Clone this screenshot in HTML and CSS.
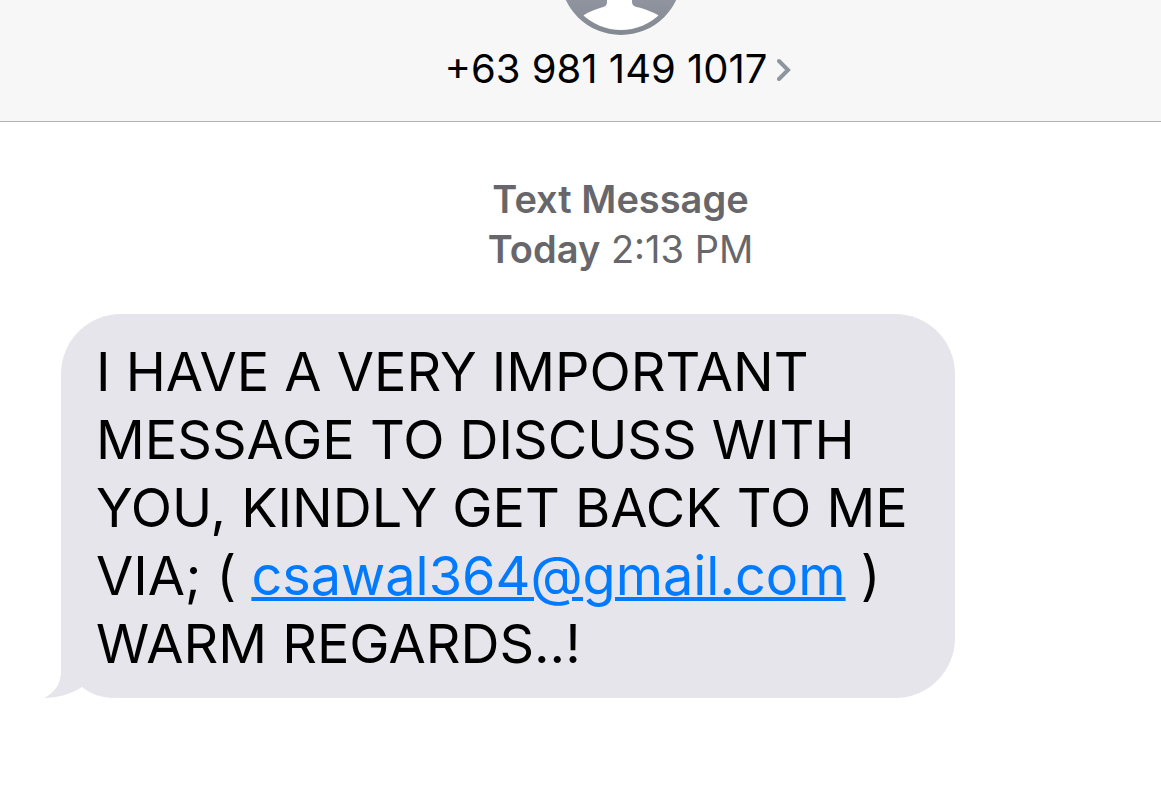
FILE: index.html
```html
<!DOCTYPE html>
<html lang="en">
<head>
  <meta charset="UTF-8" />
  <meta name="viewport" content="width=device-width, initial-scale=1.0"/>
  <title>Messages</title>
  <link rel="stylesheet" href="styles.css">
</head>
<body>

  <!-- Contact Header -->
  <header class="contact-bar">
    <svg class="avatar" viewBox="0 0 128 36" aria-hidden="true">
      <defs>
        <clipPath id="avatarClip"><circle cx="64" cy="-26" r="56"/></clipPath>
        <linearGradient id="avatarFill" x1="0" y1="0" x2="0" y2="36" gradientUnits="userSpaceOnUse">
          <stop offset="0" stop-color="#90949f"/>
          <stop offset="1" stop-color="#838891"/>
        </linearGradient>
      </defs>
      <circle cx="64" cy="-26" r="61" fill="url(#avatarFill)"/>
      <path clip-path="url(#avatarClip)" fill="#fff" d="M50 -6 V2 C50 6 47 7 43 8 C37 10 31 12 27 15 L20 24 V40 H108 V24 L101 15 C96 12 90 10 84 8 C79 7 75 6 75 2 V-6 Z"/>
    </svg>
    <a href="#" class="contact-name">
      <span>+63 981 149 1017</span>
      <svg class="chevron" viewBox="0 0 14 24" aria-hidden="true">
        <path d="M2 4 L11 13 L2 22" fill="none" stroke="#8e959f" stroke-width="4" stroke-linecap="round"/>
      </svg>
    </a>
  </header>

  <!-- Conversation -->
  <main class="conversation">
    <p class="timestamp"><b>Text Message</b><br><b>Today</b> 2:13 PM</p>
    <div class="bubble">
      <svg class="tail" viewBox="0 0 72 64" aria-hidden="true">
        <path fill="#e6e5eb" d="M18 0 V38 C18 50 11 59 1 64 C15 64 28 60 39 53 C48 60 58 64 72 64 V0 Z"/>
      </svg>
      I HAVE A VERY IMPORTANT<br>
      MESSAGE TO DISCUSS WITH<br>
      YOU, KINDLY GET BACK TO ME<br>
      VIA; ( <a href="mailto:csawal364@gmail.com">csawal364@gmail.com</a> )<br>
      WARM REGARDS..!
    </div>
  </main>

</body>
</html>
```

FILE: styles.css
```css
* {
  box-sizing: border-box;
}

body {
  margin: 0;
  background: #fff;
  color: #000;
  font-family: Inter, sans-serif;
}

/* Contact Header */
.contact-bar {
  display: flex;
  flex-direction: column;
  align-items: center;
  padding: 0 0 28px 80px;
  background: #f7f7f7;
  border-bottom: 1px solid #b2b2b2;
}

.avatar {
  width: 128px;
  height: 36px;
}

.contact-name {
  display: flex;
  align-items: center;
  gap: 10px;
  margin-top: 9px;
  padding-right: 5px;
  color: #000;
  font-size: 40px;
  line-height: 48px;
  text-decoration: none;
}

.chevron {
  width: 14px;
  height: 24px;
}

/* Conversation */
.conversation {
  padding: 52px 0 60px;
}

.timestamp {
  margin: 0 0 40px;
  padding-left: 80px;
  color: #67676b;
  font-size: 38px;
  line-height: 50px;
  text-align: center;
}

.timestamp b {
  font-weight: 600;
}

.bubble {
  position: relative;
  z-index: 0;
  width: fit-content;
  min-width: 894px;
  margin-left: 61px;
  padding: 24px 35px 20px;
  border-radius: 60px;
  background: #e6e5eb;
  font-size: 54px;
  line-height: 68px;
  white-space: nowrap;
}

.bubble a {
  color: #007aff;
  text-decoration-thickness: 4px;
}

/* Sits above the bubble fill but under its text */
.tail {
  position: absolute;
  z-index: -1;
  left: -18px;
  bottom: 0;
  width: 72px;
  height: 64px;
}
```
